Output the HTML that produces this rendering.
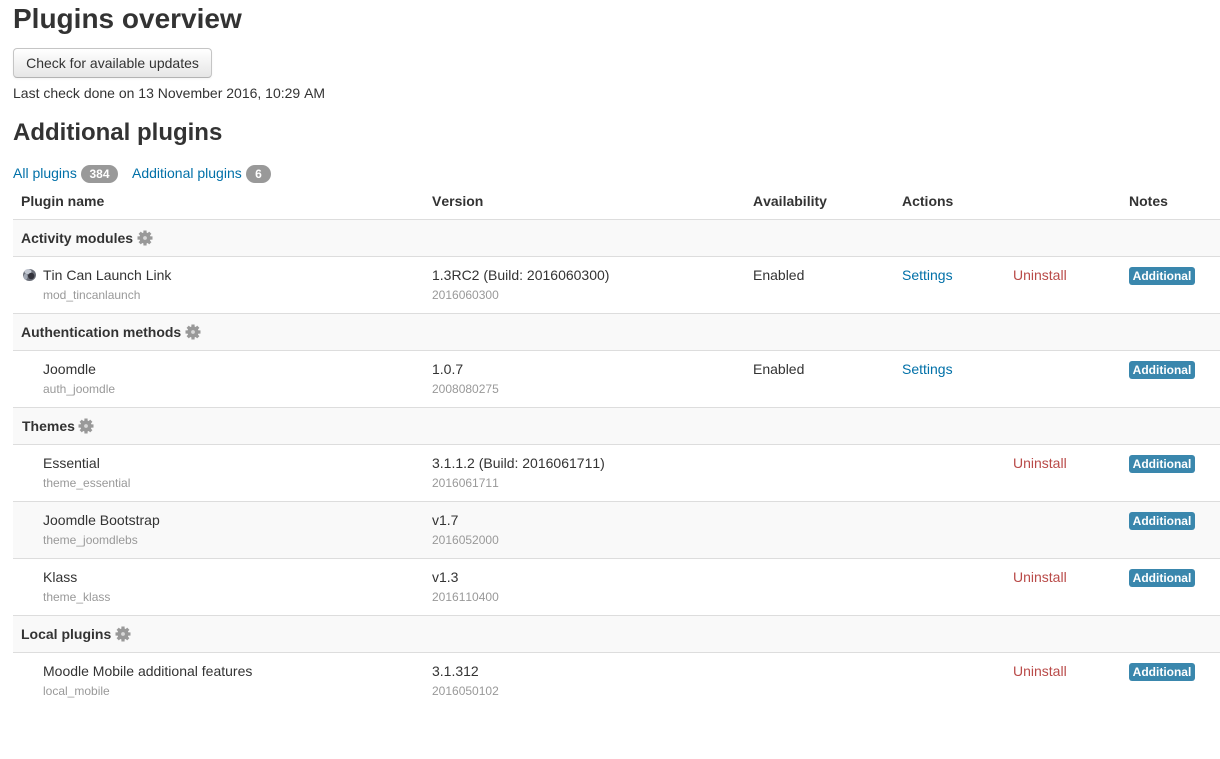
<!DOCTYPE html>
<html><head><meta charset="utf-8"><style>
html,body{margin:0;padding:0;background:#fff;width:1220px;height:759px;overflow:hidden}
body{position:relative;font-family:"Liberation Sans",sans-serif;font-size:14px;color:#333;font-kerning:none}
.t{position:absolute;white-space:nowrap;line-height:20px}
.b{font-weight:bold}
.l{color:#0070a8}
.r{color:#b94a48}
.s{color:#999;font-size:12px}
.row{position:absolute;left:13px;width:1207px;box-sizing:border-box;border-top:1px solid #ddd}
.g{background:#f9f9f9}
.note{position:absolute;left:1129px;width:66px;height:18px;background:#3a87ad;border-radius:3px;color:#fff;font-weight:bold;font-size:12px;line-height:18px;text-align:center;white-space:nowrap}
.pill{position:absolute;height:18px;background:#999;border-radius:9px;color:#fff;font-weight:bold;font-size:12px;line-height:18px;text-align:center}
.btn{position:absolute;left:13px;top:48px;width:199px;height:30px;box-sizing:border-box;border:1px solid #c5c5c5;border-bottom-color:#b3b3b3;border-radius:4px;background:linear-gradient(#fff,#e6e6e6);line-height:28px;text-align:center;color:#333;box-shadow:inset 0 1px 0 rgba(255,255,255,.2),0 1px 2px rgba(0,0,0,.05)}
svg{position:absolute}
</style></head><body>
<svg width="0" height="0" style="position:absolute"><defs><symbol id="gear" viewBox="0 0 16 16"><circle cx="8" cy="8" r="5.6" fill="#999"/><path stroke="#999" stroke-width="3.2" fill="none" d="M8 .5v15M.5 8h15M2.7 2.7l10.6 10.6M13.3 2.7L2.7 13.3"/><circle cx="8" cy="8" r="1.9" fill="#d8d8d8"/></symbol></defs></svg>

<div class="t b" style="left:13px;top:2px;font-size:28px;line-height:34px">Plugins overview</div>
<div class="btn">Check for available updates</div>
<div class="t" style="left:13px;top:83px">Last check done on 13 November 2016, 10:29 AM</div>
<div class="t b" style="left:13px;top:118px;font-size:24px;line-height:30px">Additional plugins</div>

<div class="t l" style="left:13px;top:163px">All plugins</div>
<div class="pill" style="left:81px;top:165px;width:37px">384</div>
<div class="t l" style="left:132px;top:163px">Additional plugins</div>
<div class="pill" style="left:246px;top:165px;width:25px">6</div>

<div class="t b" style="left:21px;top:191px">Plugin name</div>
<div class="t b" style="left:432px;top:191px">Version</div>
<div class="t b" style="left:753px;top:191px">Availability</div>
<div class="t b" style="left:902px;top:191px">Actions</div>
<div class="t b" style="left:1129px;top:191px">Notes</div>

<div class="row g" style="top:219px;height:38px"></div>
<div class="row" style="top:256px;height:58px"></div>
<div class="row g" style="top:313px;height:38px"></div>
<div class="row" style="top:350px;height:58px"></div>
<div class="row g" style="top:407px;height:38px"></div>
<div class="row" style="top:444px;height:58px"></div>
<div class="row g" style="top:501px;height:58px"></div>
<div class="row" style="top:558px;height:58px"></div>
<div class="row g" style="top:615px;height:38px"></div>
<div class="row" style="top:652px;height:1px"></div>

<div class="t b" style="left:21px;top:228px">Activity modules</div>
<svg width="16" height="16" style="left:137px;top:230px"><use href="#gear"/></svg>
<svg width="16" height="16" style="left:22px;top:267px" viewBox="0 0 16 16"><ellipse cx="7.5" cy="8" rx="6.5" ry="6" fill="#6a6e78"/><ellipse cx="6" cy="4.6" rx="3.5" ry="2.6" fill="#c3c8d2"/><circle cx="9.2" cy="9" r="3.2" fill="#33333c"/><ellipse cx="3.6" cy="9.8" rx="2" ry="3" fill="#a4aab6"/></svg>
<div class="t" style="left:43px;top:265px">Tin Can Launch Link</div>
<div class="t s" style="left:43px;top:285px">mod_tincanlaunch</div>
<div class="t" style="left:432px;top:265px">1.3RC2 (Build: 2016060300)</div>
<div class="t s" style="left:432px;top:285px">2016060300</div>
<div class="t" style="left:753px;top:265px">Enabled</div>
<div class="t l" style="left:902px;top:265px">Settings</div>
<div class="t r" style="left:1013px;top:265px">Uninstall</div>
<div class="note" style="top:267px">Additional</div>

<div class="t b" style="left:21px;top:322px">Authentication methods</div>
<svg width="16" height="16" style="left:185px;top:324px"><use href="#gear"/></svg>
<div class="t" style="left:43px;top:359px">Joomdle</div>
<div class="t s" style="left:43px;top:379px">auth_joomdle</div>
<div class="t" style="left:432px;top:359px">1.0.7</div>
<div class="t s" style="left:432px;top:379px">2008080275</div>
<div class="t" style="left:753px;top:359px">Enabled</div>
<div class="t l" style="left:902px;top:359px">Settings</div>
<div class="note" style="top:361px">Additional</div>

<div class="t b" style="left:22px;top:416px">Themes</div>
<svg width="16" height="16" style="left:78px;top:418px"><use href="#gear"/></svg>
<div class="t" style="left:43px;top:453px">Essential</div>
<div class="t s" style="left:43px;top:473px">theme_essential</div>
<div class="t" style="left:432px;top:453px">3.1.1.2 (Build: 2016061711)</div>
<div class="t s" style="left:432px;top:473px">2016061711</div>
<div class="t r" style="left:1013px;top:453px">Uninstall</div>
<div class="note" style="top:455px">Additional</div>

<div class="t" style="left:43px;top:510px">Joomdle Bootstrap</div>
<div class="t s" style="left:43px;top:530px">theme_joomdlebs</div>
<div class="t" style="left:432px;top:510px">v1.7</div>
<div class="t s" style="left:432px;top:530px">2016052000</div>
<div class="note" style="top:512px">Additional</div>

<div class="t" style="left:43px;top:567px">Klass</div>
<div class="t s" style="left:43px;top:587px">theme_klass</div>
<div class="t" style="left:432px;top:567px">v1.3</div>
<div class="t s" style="left:432px;top:587px">2016110400</div>
<div class="t r" style="left:1013px;top:567px">Uninstall</div>
<div class="note" style="top:569px">Additional</div>

<div class="t b" style="left:21px;top:624px">Local plugins</div>
<svg width="16" height="16" style="left:115px;top:626px"><use href="#gear"/></svg>
<div class="t" style="left:43px;top:661px">Moodle Mobile additional features</div>
<div class="t s" style="left:43px;top:681px">local_mobile</div>
<div class="t" style="left:432px;top:661px">3.1.312</div>
<div class="t s" style="left:432px;top:681px">2016050102</div>
<div class="t r" style="left:1013px;top:661px">Uninstall</div>
<div class="note" style="top:663px">Additional</div>
</body></html>
